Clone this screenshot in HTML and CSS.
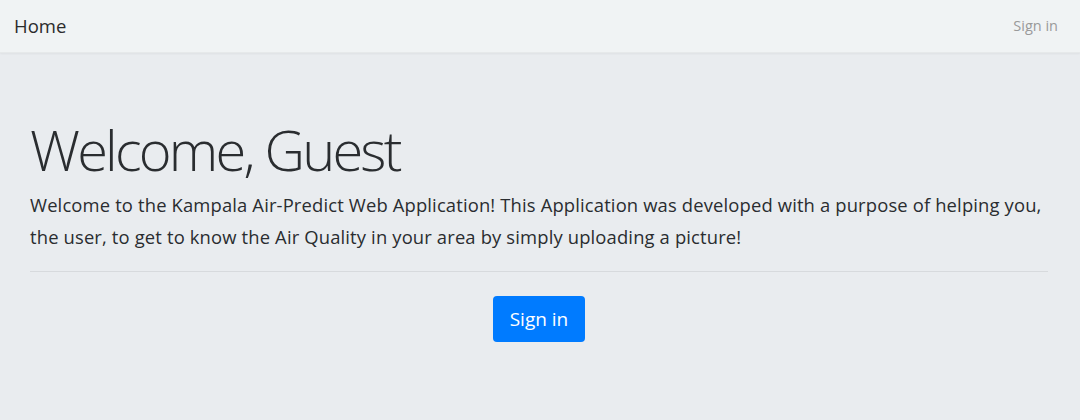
FILE: index.html
```html
<!DOCTYPE html>
<html lang="en">
<head>
<meta charset="utf-8">
<title>Kampala Air-Predict</title>
<link rel="stylesheet" href="styles.css">
</head>
<body>
<nav class="navbar">
  <a class="brand" href="#">Home</a>
  <a class="nav-link" href="#">Sign in</a>
</nav>
<main class="jumbotron">
  <h1 class="display">Welcome, Guest</h1>
  <p class="lead">Welcome to the Kampala Air-Predict Web Application! This Application was developed with a purpose of helping you, the user, to get to know the Air Quality in your area by simply uploading a picture!</p>
  <hr class="divider">
  <div class="actions">
    <a class="btn" href="#">Sign in</a>
  </div>
</main>
</body>
</html>
```

FILE: styles.css
```css
* { box-sizing: border-box; }
html, body { margin: 0; padding: 0; height: 100%; }
body {
  font-family: "Open Sans", "Noto Sans", sans-serif;
  color: #212529;
  background: #e9ecef;
}
a { text-decoration: none; }
.navbar {
  height: 53px;
  background: #f0f3f4;
  display: flex;
  align-items: center;
  justify-content: space-between;
  padding: 0 22px 0 14px;
  box-shadow: 0 1px 2px rgba(0,0,0,0.05);
  border-bottom: 1px solid #e6e9ea;
}
.brand {
  font-size: 18.5px;
  color: #2b2b2b;
  margin-top: -1px;
}
.nav-link {
  font-size: 14.5px;
  color: #9a9a9a;
  margin-top: -2px;
}
.jumbotron {
  padding: 60px 32px 0 30px;
}
.display {
  margin: 0 0 4px 0;
  font-size: 56px;
  font-weight: 300;
  line-height: 72px;
  color: #2a2d30;
  letter-spacing: -2.8px;
}
.lead {
  margin: 0;
  font-size: 18.4px;
  letter-spacing: 0.15px;
  line-height: 32px;
  color: #2a2d30;
}
.divider {
  margin: 18px 0 24px 0;
  border: 0;
  border-top: 1px solid #d7dadd;
}
.actions {
  display: flex;
  justify-content: center;
}
.btn {
  display: inline-block;
  background: #007bff;
  color: #fff;
  font-size: 19px;
  line-height: 28px;
  padding: 9px 17px;
  border-radius: 4px;
}
```
